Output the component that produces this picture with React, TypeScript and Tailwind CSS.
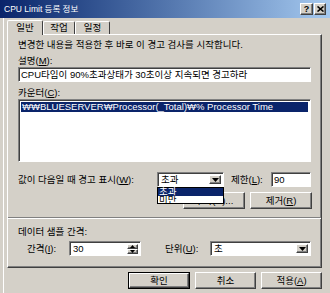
import React from "react";

const raised =
  "border border-t-white border-l-white border-r-[#404040] border-b-[#404040] shadow-[inset_-1px_-1px_#808080]";
const sunken =
  "border border-t-[#808080] border-l-[#808080] border-r-white border-b-white shadow-[inset_1px_1px_#404040]";

function Btn({ children, w, def }: { children: React.ReactNode; w: string; def?: boolean }) {
  if (def) {
    return (
      <div className={`${w} h-[17px] border border-black flex`}>
        <div className={`flex-1 ${raised} flex items-center justify-center leading-none`}>{children}</div>
      </div>
    );
  }
  return (
    <div className={`${w} h-[17px] ${raised} flex items-center justify-center leading-none`}>{children}</div>
  );
}

function Arrow() {
  return (
    <div className={`w-[12px] h-full ${raised} bg-[#d4d0c8] flex items-center justify-center`}>
      <svg width="7" height="4" viewBox="0 0 7 4">
        <path d="M0 0H7L3.5 4Z" fill="black" />
      </svg>
    </div>
  );
}

export default function App() {
  return (
    <div className="w-[330px] h-[293px] bg-[#d4d0c8] overflow-hidden flex flex-col text-[9.5px] text-black font-['Liberation_Sans','Noto_Sans_CJK_KR',sans-serif]">
      {/* title bar */}
      <div className="h-[18px] shrink-0 flex items-center pl-[4px] pr-[4px] bg-linear-to-r from-[#0a246a] to-[#a6caf0] text-white">
        <span className="flex-1 text-[8.5px] leading-none">CPU Limit 등록 정보</span>
        <div className={`w-[13px] h-[12px] bg-[#d4d0c8] ${raised} flex items-center justify-center text-black font-bold text-[9px] leading-none`}>
          ?
        </div>
        <div className={`w-[12px] h-[12px] ml-px bg-[#d4d0c8] ${raised} flex items-center justify-center`}>
          <svg width="7" height="6" viewBox="0 0 7 6">
            <path d="M0.5 0.5L6.5 5.5M6.5 0.5L0.5 5.5" stroke="black" strokeWidth="1.6" />
          </svg>
        </div>
      </div>

      {/* body */}
      <div className="flex-1 ml-[3px] border-l border-white pl-[3px] flex flex-col">
        {/* tabs */}
        <div className="h-[15px] mt-px flex items-end relative z-10">
          <div className="w-[36px] h-[15px] -mb-px bg-[#d4d0c8] border-t border-l border-white border-r border-r-[#404040] rounded-t-[2px] flex items-start justify-center pt-[2px] leading-[10px]">
            일반
          </div>
          <div className="w-[32px] h-[13px] bg-[#d4d0c8] border-t border-l border-white border-r border-r-[#404040] rounded-t-[2px] flex items-start justify-center pt-px leading-[10px]">
            작업
          </div>
          <div className="w-[35px] h-[13px] bg-[#d4d0c8] border-t border-l border-white border-r border-r-[#404040] rounded-t-[2px] flex items-start justify-center pt-px leading-[10px]">
            일정
          </div>
        </div>

        {/* panel */}
        <div className={`w-[315px] h-[234px] ${raised} pl-[10px] pt-[4px] flex flex-col`}>
          <div className="h-[12px] leading-[12px]">변경한 내용을 적용한 후 바로 이 경고 검사를 시작합니다.</div>
          <div className="h-[12px] leading-[12px] mt-[4px]">
            설명(<span className="underline">M</span>):
          </div>
          <div className={`w-[293px] h-[15px] bg-white ${sunken} pl-[2px] flex items-center leading-none`}>
            CPU타임이 90%초과상태가 30초이상 지속되면 경고하라
          </div>
          <div className="h-[12px] leading-[12px] mt-[5px]">
            카운터(<span className="underline">C</span>):
          </div>
          <div className={`w-[293px] h-[63px] bg-white ${sunken} p-[2px]`}>
            <div className="h-[10px] bg-[#0a246a] text-white leading-[10px] pl-px">
              ₩₩BLUESERVER₩Processor(_Total)₩% Processor Time
            </div>
          </div>

          <div className="flex items-center mt-[10px] h-[15px]">
            <div className="w-[139px] leading-none">
              값이 다음일 때 경고 표시(<span className="underline">W</span>):
            </div>
            <div className="relative w-[67px] h-[15px]">
              <div className={`w-full h-full bg-white ${sunken} flex items-stretch p-[2px]`}>
                <div className="flex-1 flex items-center pl-px leading-none">초과</div>
                <Arrow />
              </div>
              <div className="absolute left-0 top-full w-[67px] h-[17px] border border-black bg-white flex flex-col z-20">
                <div className="h-[8px] bg-[#0a246a] text-white leading-[8px] pl-px">초과</div>
                <div className="h-[8px] leading-[8px] pl-px">미만</div>
              </div>
            </div>
            <div className="ml-[7px] w-[40px] leading-none">
              제한(<span className="underline">L</span>):
            </div>
            <div className={`w-[40px] h-[15px] bg-white ${sunken} pl-[2px] flex items-center leading-none`}>90</div>
          </div>

          <div className="flex mt-[5px]">
            <div className="ml-[165px]">
              <Btn w="w-[62px]">추가(D)...</Btn>
            </div>
            <div className="ml-[5px]">
              <Btn w="w-[62px]">
                <span>
                  제거(<span className="underline">R</span>)
                </span>
              </Btn>
            </div>
          </div>

          <div className="mt-[8px] -ml-[10px] w-[313px] h-[2px] border-t border-t-[#808080] border-b border-b-white" />

          <div className="h-[12px] leading-[12px] mt-[7px]">데이터 샘플 간격:</div>
          <div className="flex items-center mt-[3px] h-[15px]">
            <div className="ml-[9px] w-[42px] leading-none">
              간격(<span className="underline">I</span>):
            </div>
            <div className={`w-[72px] h-[15px] bg-white ${sunken} flex items-stretch p-[2px]`}>
              <div className="flex-1 flex items-center pl-px leading-none">30</div>
              <div className="w-[11px] flex flex-col">
                <div className={`flex-1 ${raised} bg-[#d4d0c8] flex items-center justify-center`}>
                  <svg width="5" height="3" viewBox="0 0 5 3">
                    <path d="M0 3H5L2.5 0Z" fill="black" />
                  </svg>
                </div>
                <div className={`flex-1 ${raised} bg-[#d4d0c8] flex items-center justify-center`}>
                  <svg width="5" height="3" viewBox="0 0 5 3">
                    <path d="M0 0H5L2.5 3Z" fill="black" />
                  </svg>
                </div>
              </div>
            </div>
            <div className="ml-[24px] w-[45px] leading-none">
              단위(<span className="underline">U</span>):
            </div>
            <div className={`w-[101px] h-[15px] bg-white ${sunken} flex items-stretch p-[2px]`}>
              <div className="flex-1 flex items-center pl-px leading-none">초</div>
              <Arrow />
            </div>
          </div>
        </div>

        {/* bottom buttons */}
        <div className="w-[315px] flex justify-end gap-[5px] mt-[4px]">
          <Btn w="w-[62px]" def>
            확인
          </Btn>
          <Btn w="w-[61px]">취소</Btn>
          <Btn w="w-[61px]">
            <span>
              적용(<span className="underline">A</span>)
            </span>
          </Btn>
        </div>
      </div>
    </div>
  );
}
